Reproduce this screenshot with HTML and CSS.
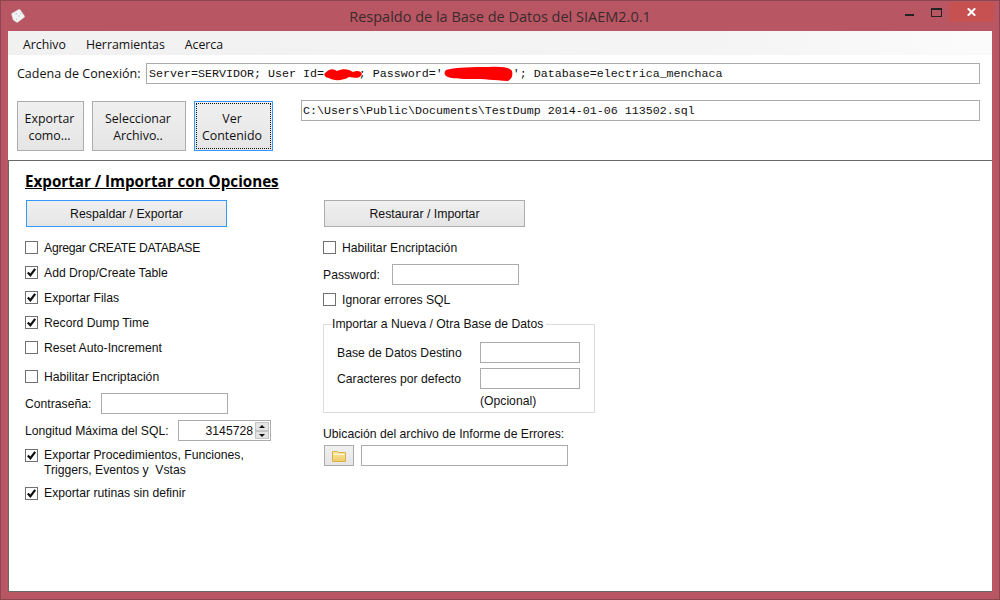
FILE: index.html

```html
<!DOCTYPE html>
<html lang="es">
<head>
  <meta charset="UTF-8" />
  <title>Respaldo de la Base de Datos del SIAEM2.0.1</title>
  <link rel="stylesheet" href="styles.css">
</head>
<body>
  <div class="window">
    <div class="titlebar">
      <svg class="app-icon" width="16" height="16" viewBox="0 0 18 18">
        <path d="M2 6 L10 1.5 Q11 1.2 11.6 2 L16.5 9 Q17 10 16 10.6 L9 16 Q8 16.6 7 16 L3.5 13.5 Q3 13 3 12 L1.6 7 Q1.5 6.4 2 6 Z" fill="#f2f2f2" stroke="#b9a0a4" stroke-width="0.5"/>
        <circle cx="7" cy="6.5" r="0.7" fill="#7f9fc4"/>
        <circle cx="10" cy="9" r="0.7" fill="#7f9fc4"/>
        <circle cx="12" cy="6" r="0.6" fill="#a5b5c6"/>
        <circle cx="7.5" cy="12.5" r="0.6" fill="#a5b5c6"/>
      </svg>
      <div class="title">Respaldo de la Base de Datos del SIAEM2.0.1</div>
      <div class="win-btns">
        <div class="win-min"></div>
        <div class="win-max"></div>
        <div class="win-close">
          <svg width="9" height="8" viewBox="0 0 9 8"><path d="M0.8 0.3 L8.2 7.7 M8.2 0.3 L0.8 7.7" stroke="#fff" stroke-width="2"/></svg>
        </div>
      </div>
    </div>

    <div class="client">
      <div class="menubar">
        <span>Archivo</span>
        <span>Herramientas</span>
        <span>Acerca</span>
      </div>

      <div class="top">
        <div class="conn-row">
          <label class="conn-label">Cadena de Conexión:</label>
          <div class="field mono conn-field">Server=SERVIDOR; User Id=&nbsp;&nbsp;&nbsp;&nbsp;&nbsp;; Password='&nbsp;&nbsp;&nbsp;&nbsp;&nbsp;&nbsp;&nbsp;&nbsp;&nbsp;&nbsp;'; Database=electrica_menchaca
            <svg class="scribble scribble-user" width="40" height="14" viewBox="0 0 40 14"><path d="M2 6 C8 1 10 2 14 4 C20 1 26 2 30 5 C34 3 38 4 39 7 C37 12 32 11 26 10 C20 14 10 14 6 11 C3 11 0 8 2 6 Z" fill="#f00"/></svg>
            <svg class="scribble scribble-pass" width="69" height="16" viewBox="0 0 69 16"><path d="M2 4 C12 1 30 1 45 1 C55 0 66 1 68 5 C69 9 68 13 64 15 C50 14 40 13 28 13 C18 13 6 13 2 10 C0 8 0 6 2 4 Z" fill="#f00"/></svg>
          </div>
        </div>
        <div class="file-row">
          <button class="btn btn-export">Exportar<br>como...</button>
          <button class="btn btn-select">Seleccionar<br>Archivo..</button>
          <button class="btn btn-view"><span>Ver<br>Contenido</span></button>
          <div class="field mono file-field">C:\Users\Public\Documents\TestDump 2014-01-06 113502.sql</div>
        </div>
      </div>

      <div class="panel">
        <div class="heading">Exportar / Importar con Opciones</div>
        <div class="columns">
          <div class="col-left">
            <button class="btn2 btn2-active">Respaldar / Exportar</button>
            <div class="check-list">
              <div class="check-row caps"><span class="check"></span>Agregar CREATE DATABASE</div>
              <div class="check-row"><span class="check"><svg class="tick" width="11" height="11" viewBox="0 0 11 11"><path d="M1.8 5.4 L4.4 8.2 L9.2 1.8"/></svg></span>Add Drop/Create Table</div>
              <div class="check-row"><span class="check"><svg class="tick" width="11" height="11" viewBox="0 0 11 11"><path d="M1.8 5.4 L4.4 8.2 L9.2 1.8"/></svg></span>Exportar Filas</div>
              <div class="check-row"><span class="check"><svg class="tick" width="11" height="11" viewBox="0 0 11 11"><path d="M1.8 5.4 L4.4 8.2 L9.2 1.8"/></svg></span>Record Dump Time</div>
              <div class="check-row"><span class="check"></span>Reset Auto-Increment</div>
            </div>
            <div class="check-row encrypt-left"><span class="check"></span>Habilitar Encriptación</div>
            <div class="input-row pass-left"><span class="lbl-pass-left">Contraseña:</span><div class="field small-field"></div></div>
            <div class="input-row sql-row">
              <span class="lbl-sql">Longitud Máxima del SQL:</span>
              <div class="field spinner">
                <span class="spin-value">3145728</span>
                <div class="spin-btns"><div class="spin-up"></div><div class="spin-down"></div></div>
              </div>
            </div>
            <div class="check-multi"><span class="check"><svg class="tick" width="11" height="11" viewBox="0 0 11 11"><path d="M1.8 5.4 L4.4 8.2 L9.2 1.8"/></svg></span><div>Exportar Procedimientos, Funciones,<br>Triggers, Eventos y&nbsp; Vstas</div></div>
            <div class="check-multi last"><span class="check"><svg class="tick" width="11" height="11" viewBox="0 0 11 11"><path d="M1.8 5.4 L4.4 8.2 L9.2 1.8"/></svg></span><div>Exportar rutinas sin definir</div></div>
          </div>

          <div class="col-right">
            <button class="btn2">Restaurar / Importar</button>
            <div class="check-list">
              <div class="check-row"><span class="check"></span>Habilitar Encriptación</div>
            </div>
            <div class="input-row pass-right"><span class="lbl-pass-right">Password:</span><div class="field small-field"></div></div>
            <div class="check-row ignore-row"><span class="check"></span>Ignorar errores SQL</div>
            <fieldset class="group">
              <legend>Importar a Nueva / Otra Base de Datos</legend>
              <div class="group-row"><span class="group-label">Base de Datos Destino</span><div class="field group-field"></div></div>
              <div class="group-row second"><span class="group-label">Caracteres por defecto</span><div class="field group-field"></div></div>
              <div class="optional">(Opcional)</div>
            </fieldset>
            <div class="log-label">Ubicación del archivo de Informe de Errores:</div>
            <div class="log-row">
              <button class="folder-btn">
                <svg width="15" height="12" viewBox="0 0 15 12">
                  <defs><linearGradient id="folder" x1="0" y1="0" x2="0" y2="1"><stop offset="0" stop-color="#fbe9a6"/><stop offset="1" stop-color="#efcb62"/></linearGradient></defs>
                  <path d="M0.5 1.5 H5.5 L6.5 2.5 H13.5 V11.5 H0.5 Z" fill="url(#folder)" stroke="#d9b04e"/>
                  <path d="M1.5 4.5 H12.5" stroke="#fdf6d2"/>
                </svg>
              </button>
              <div class="field log-field"></div>
            </div>
          </div>
        </div>
      </div>
    </div>
  </div>
</body>
</html>
```

FILE: styles.css

```css
* { box-sizing: border-box; }
html, body { margin: 0; height: 100%; overflow: hidden; }
body { font-family: "Liberation Sans", sans-serif; font-size: 12.2px; color: #111; }

.window {
  width: 1000px;
  height: 600px;
  background: #b85763;
  border: 1px solid #8d4550;
  display: flex;
  flex-direction: column;
}

.titlebar {
  height: 30px;
  display: flex;
  align-items: center;
  position: relative;
  flex: none;
}
.app-icon { position: absolute; left: 9px; top: 7px; }
.title {
  width: 100%;
  text-align: center;
  font-family: "Open Sans", sans-serif;
  font-size: 14.5px;
  color: #3b2a2d;
}
.win-btns { position: absolute; right: 5px; top: 1px; display: flex; }
.win-min { width: 9px; height: 2px; background: #222; margin: 12px 17px 0 0; }
.win-max { width: 11px; height: 9px; border: 1px solid #222; border-top-width: 2px; margin: 6px 7px 0 0; }
.win-close {
  width: 45px;
  height: 20px;
  background: #c75050;
  display: flex;
  align-items: center;
  justify-content: center;
}

.client {
  flex: none;
  margin: 0 7px;
  width: 984px;
  height: 561px;
  background: #fff;
  display: flex;
  flex-direction: column;
}

.menubar {
  height: 24px;
  flex: none;
  background: linear-gradient(to right, #f1f1f1, #f4f4f4 70%, #fbfbfb);
  font-family: "Open Sans", sans-serif;
  font-size: 12.3px;
  display: flex;
  gap: 20px;
  padding: 2px 0 0 15px;
  align-items: center;
}

.top { height: 105px; flex: none; padding-left: 9px; }
.conn-row { display: flex; align-items: center; padding-top: 8px; }
.conn-label { font-family: "Open Sans", sans-serif; font-size: 12.5px; width: 129px; }
.field { border: 1px solid #ababab; background: #fff; }
.mono { font-family: "Liberation Mono", monospace; font-size: 11.67px; line-height: 19px; white-space: nowrap; padding: 1px 0 0 2px; color: #111; }
.conn-field { width: 834px; height: 21px; position: relative; }
.scribble { position: absolute; }
.scribble-user { left: 176px; top: 3px; }
.scribble-pass { left: 297px; top: 2px; }

.file-row { display: flex; align-items: flex-start; padding-top: 16px; }
.btn {
  height: 50px;
  background: linear-gradient(#f0f0f0, #e5e5e5);
  border: 1px solid #acacac;
  font-family: "Open Sans", sans-serif;
  font-size: 12.4px;
  line-height: 17px;
  color: #111;
  padding: 2px 2px 0 0;
  margin: 1px 8px 0 0;
}
.btn-export { width: 67px; }
.btn-select { width: 94px; }
.btn-view {
  width: 79px;
  border-color: #3399ff;
  padding: 1px;
  margin-right: 28px;
}
.btn-view span {
  display: flex;
  align-items: center;
  justify-content: center;
  text-align: center;
  height: 100%;
  padding: 2px 3px 0 0;
  border: 1px dotted #111;
}
.file-field { width: 679px; height: 21px; padding-left: 1px; }

.panel {
  flex: 1;
  border-top: 1px solid #696969;
  border-left: 1px solid #696969;
  border-bottom: 1px solid #696969;
  padding: 11px 0 0 16px;
}
.heading {
  font-family: "Open Sans", sans-serif;
  font-weight: bold;
  font-size: 15.2px;
  line-height: 18px;
  height: 18px;
  text-decoration: underline;
  color: #000;
}
.columns { display: flex; margin-top: 10px; }
.col-left { width: 298px; }
.col-right { width: 290px; }

.btn2 {
  display: block;
  width: 201px;
  height: 27px;
  margin-left: 1px;
  background: linear-gradient(#f0f0f0, #e5e5e5);
  border: 1px solid #acacac;
  font-family: "Liberation Sans", sans-serif;
  font-size: 12.3px;
  color: #111;
  padding: 0;
}
.btn2-active { border-color: #3399ff; }

.check-list { margin-top: 8px; }
.check-row { height: 25px; display: flex; align-items: center; }
.caps { letter-spacing: -0.25px; }
.check {
  flex: none;
  width: 13px;
  height: 13px;
  border: 1px solid #707070;
  background: #fff;
  margin-right: 6px;
  display: block;
}
.tick { display: block; }
.tick path { fill: none; stroke: #111; stroke-width: 2.2; }

.encrypt-left { margin-top: 4px; }
.input-row { display: flex; align-items: center; }
.small-field { height: 21px; width: 127px; }
.pass-left { margin-top: 4px; }
.lbl-pass-left { width: 76px; }
.sql-row { margin-top: 6px; }
.lbl-sql { width: 153px; }
.spinner {
  width: 93px;
  height: 21px;
  display: flex;
  align-items: center;
  justify-content: flex-end;
  padding-right: 1px;
}
.spin-value { margin-right: 2px; }
.spin-btns { width: 14px; height: 17px; display: flex; flex-direction: column; }
.spin-up, .spin-down {
  flex: 1;
  background: #e4e4e4;
  border: 1px solid #c4c4c4;
  position: relative;
}
.spin-up::after, .spin-down::after {
  content: "";
  position: absolute;
  left: 3px;
  top: 2px;
  border-left: 3px solid transparent;
  border-right: 3px solid transparent;
}
.spin-up::after { border-bottom: 3px solid #111; }
.spin-down::after { border-top: 3px solid #111; }

.check-multi { display: flex; margin-top: 7px; line-height: 15px; }
.check-multi .check { margin-top: 1px; }
.check-multi.last { margin-top: 8px; }

.pass-right { margin-top: 4px; }
.lbl-pass-right { width: 69px; }
.ignore-row { margin-top: 2px; }

.group {
  margin: 5px 0 0 0;
  width: 272px;
  height: 96px;
  border: 1px solid #dcdcdc;
  padding: 0 0 0 13px;
}
.group legend { padding: 0 3px 0 0; margin-left: -5px; line-height: 15px; height: 15px; }
.group-row { display: flex; align-items: center; margin-top: 10px; }
.group-row.second { margin-top: 5px; }
.group-label { width: 143px; }
.group-field { width: 100px; height: 21px; }
.optional { margin: 5px 0 0 143px; line-height: 15px; }

.log-label { margin-top: 14px; line-height: 15px; }
.log-row { display: flex; margin-top: 3px; }
.folder-btn {
  width: 30px;
  height: 21px;
  margin: 0 7px 0 1px;
  background: linear-gradient(#f0f0f0, #e5e5e5);
  border: 1px solid #acacac;
  padding: 1px 0 0 0;
  display: flex;
  align-items: center;
  justify-content: center;
}
.log-field { width: 207px; height: 21px; }
```
